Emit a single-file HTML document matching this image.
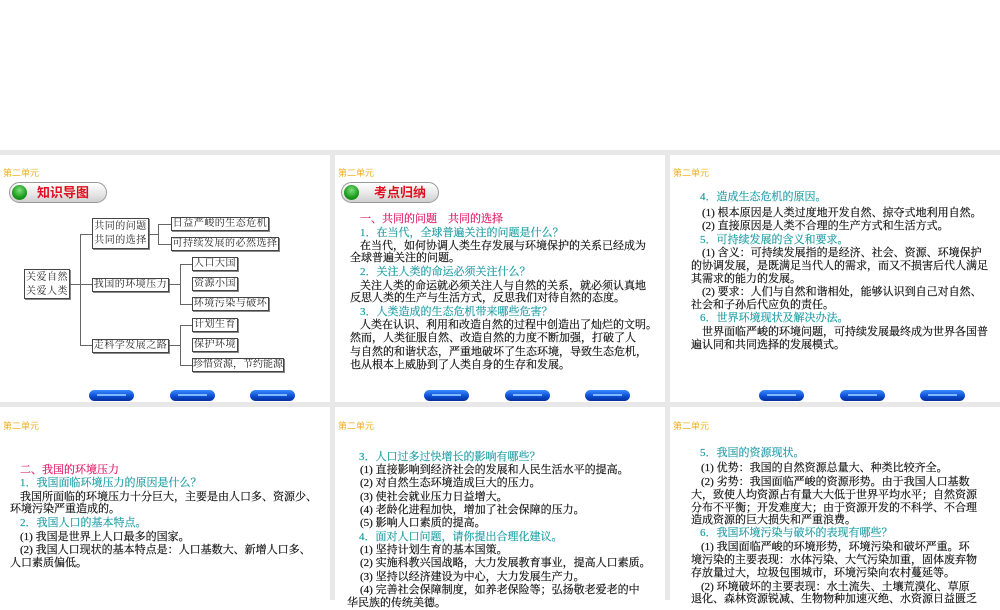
<!DOCTYPE html>
<html><head><meta charset="utf-8"><style>
*{margin:0;padding:0;box-sizing:border-box}
body{width:1000px;height:600px;overflow:hidden;background:#fff;position:relative;font-family:"Liberation Serif","Noto Serif CJK SC",serif}
.g{position:absolute;left:0;top:150px;width:1000px;height:450px;background:#e8e8e8}
.s{position:absolute;background:#fff;overflow:hidden}
.u{position:absolute;left:3px;top:166px;font-size:9px;color:#f0b020;font-family:"Liberation Sans","Noto Sans CJK SC",sans-serif}
.l{position:absolute;font-size:11px;line-height:14px;white-space:nowrap;color:#111;-webkit-text-stroke:0.2px #111}
.t{color:#1f9ea6;-webkit-text-stroke:0.2px #1f9ea6}
.p{color:#e0206a;-webkit-text-stroke:0.2px #e0206a}
.pill{position:absolute;width:98px;height:21px;border:1px solid #999;border-radius:11px;background:linear-gradient(#ffffff,#e8e8e8 55%,#cfcfcf)}
.pill i{position:absolute;left:2px;top:2px;width:15px;height:15px;border-radius:50%;background:radial-gradient(circle at 50% 35%,#7fe07f,#1a9a1a 60%,#0a6a0a)}
.pill b{position:absolute;left:27px;top:2px;font-size:13px;line-height:15px;color:#e01020;font-family:"Liberation Sans","Noto Sans CJK SC",sans-serif}
.btn{position:absolute;width:45px;height:11px;border-radius:6px;background:linear-gradient(#3a8cff,#0a4ad0 60%,#06309a);}
.btn:after{content:"";position:absolute;left:8px;right:8px;top:4px;height:2px;background:#7fb8ff}
.bx{position:absolute;border:1px solid #444;font-size:10px;line-height:12px;color:#222;padding:0;white-space:nowrap;box-shadow:1px 1px 0 #888;letter-spacing:0.5px;text-align:center;overflow:hidden}
.ln{position:absolute;background:#666}
</style></head><body>
<div class="g"></div>
<div class="s" style="left:0;top:155px;width:330px;height:247px"></div>
<div class="s" style="left:335px;top:155px;width:330px;height:247px"></div>
<div class="s" style="left:670px;top:155px;width:330px;height:247px"></div>
<div class="s" style="left:0;top:407px;width:330px;height:193px"></div>
<div class="s" style="left:335px;top:407px;width:330px;height:193px"></div>
<div class="s" style="left:670px;top:407px;width:330px;height:193px"></div>

<div class="u" style="left:3px;top:166px">第二单元</div>
<div class="u" style="left:338px;top:166px">第二单元</div>
<div class="u" style="left:673px;top:166px">第二单元</div>
<div class="u" style="left:3px;top:419px">第二单元</div>
<div class="u" style="left:338px;top:419px">第二单元</div>
<div class="u" style="left:673px;top:419px">第二单元</div>

<div class="pill" style="left:9px;top:182px"><i></i><b>知识导图</b></div>
<div class="pill" style="left:341px;top:182px"><i></i><b style="left:32px">考点归纳</b></div>

<div class="bx" style="left:24px;top:269px;width:46px;height:30px;line-height:14px;padding-top:1px">关爱自然<br>关爱人类</div>
<div class="bx" style="left:92px;top:218px;width:57px;height:31px;line-height:14px;padding-top:1px">共同的问题<br>共同的选择</div>
<div class="bx" style="left:92px;top:278px;width:77px;height:14px">我国的环境压力</div>
<div class="bx" style="left:92px;top:339px;width:77px;height:14px">走科学发展之路</div>
<div class="bx" style="left:171px;top:217px;width:98px;height:14px">日益严峻的生态危机</div>
<div class="bx" style="left:171px;top:237px;width:108px;height:14px">可持续发展的必然选择</div>
<div class="bx" style="left:192px;top:257px;width:46px;height:14px">人口大国</div>
<div class="bx" style="left:192px;top:277px;width:46px;height:14px">资源小国</div>
<div class="bx" style="left:192px;top:297px;width:77px;height:14px">环境污染与破坏</div>
<div class="bx" style="left:192px;top:318px;width:46px;height:14px">计划生育</div>
<div class="bx" style="left:192px;top:338px;width:46px;height:14px">保护环境</div>
<div class="bx" style="left:192px;top:358px;width:92px;height:14px;letter-spacing:0">珍惜资源，节约能源</div>
<div class="ln" style="left:70px;top:284px;width:10px;height:1px"></div>
<div class="ln" style="left:80px;top:234px;width:1px;height:112px"></div>
<div class="ln" style="left:80px;top:234px;width:12px;height:1px"></div>
<div class="ln" style="left:80px;top:284px;width:12px;height:1px"></div>
<div class="ln" style="left:80px;top:345px;width:12px;height:1px"></div>
<div class="ln" style="left:149px;top:234px;width:9px;height:1px"></div>
<div class="ln" style="left:158px;top:224px;width:1px;height:21px"></div>
<div class="ln" style="left:158px;top:224px;width:13px;height:1px"></div>
<div class="ln" style="left:158px;top:244px;width:13px;height:1px"></div>
<div class="ln" style="left:169px;top:284px;width:11px;height:1px"></div>
<div class="ln" style="left:180px;top:264px;width:1px;height:41px"></div>
<div class="ln" style="left:180px;top:264px;width:12px;height:1px"></div>
<div class="ln" style="left:180px;top:304px;width:12px;height:1px"></div>
<div class="ln" style="left:169px;top:345px;width:11px;height:1px"></div>
<div class="ln" style="left:180px;top:325px;width:1px;height:41px"></div>
<div class="ln" style="left:180px;top:325px;width:12px;height:1px"></div>
<div class="ln" style="left:180px;top:365px;width:12px;height:1px"></div>

<div class="btn" style="left:89px;top:390px"></div><div class="btn" style="left:170px;top:390px"></div><div class="btn" style="left:250px;top:390px"></div>
<div class="btn" style="left:424px;top:390px"></div><div class="btn" style="left:505px;top:390px"></div><div class="btn" style="left:585px;top:390px"></div>
<div class="btn" style="left:759px;top:390px"></div><div class="btn" style="left:840px;top:390px"></div><div class="btn" style="left:920px;top:390px"></div>

<div class="l p" style="left:360px;top:212px">一、共同的问题　共同的选择</div>
<div class="l t" style="left:360px;top:226px">1．在当代，全球普遍关注的问题是什么？</div>
<div class="l" style="left:360px;top:239px">在当代，如何协调人类生存发展与环境保护的关系已经成为</div>
<div class="l" style="left:350px;top:251px">全球普遍关注的问题。</div>
<div class="l t" style="left:360px;top:265px">2．关注人类的命运必须关注什么？</div>
<div class="l" style="left:360px;top:279px">关注人类的命运就必须关注人与自然的关系，就必须认真地</div>
<div class="l" style="left:350px;top:291px">反思人类的生产与生活方式，反思我们对待自然的态度。</div>
<div class="l t" style="left:360px;top:305px">3．人类造成的生态危机带来哪些危害？</div>
<div class="l" style="left:360px;top:318px">人类在认识、利用和改造自然的过程中创造出了灿烂的文明。</div>
<div class="l" style="left:350px;top:331px">然而，人类征服自然、改造自然的力度不断加强，打破了人</div>
<div class="l" style="left:350px;top:345px">与自然的和谐状态，严重地破坏了生态环境，导致生态危机，</div>
<div class="l" style="left:350px;top:358px">也从根本上威胁到了人类自身的生存和发展。</div>

<div class="l t" style="left:700px;top:190px">4．造成生态危机的原因。</div>
<div class="l" style="left:702px;top:206px">(1) 根本原因是人类过度地开发自然、掠夺式地利用自然。</div>
<div class="l" style="left:702px;top:219px">(2) 直接原因是人类不合理的生产方式和生活方式。</div>
<div class="l t" style="left:700px;top:233px">5．可持续发展的含义和要求。</div>
<div class="l" style="left:702px;top:246px">(1) 含义：可持续发展指的是经济、社会、资源、环境保护</div>
<div class="l" style="left:691px;top:259px">的协调发展，是既满足当代人的需求，而又不损害后代人满足</div>
<div class="l" style="left:691px;top:272px">其需求的能力的发展。</div>
<div class="l" style="left:702px;top:285px">(2) 要求：人们与自然和谐相处，能够认识到自己对自然、</div>
<div class="l" style="left:691px;top:298px">社会和子孙后代应负的责任。</div>
<div class="l t" style="left:700px;top:311px">6．世界环境现状及解决办法。</div>
<div class="l" style="left:702px;top:325px">世界面临严峻的环境问题，可持续发展最终成为世界各国普</div>
<div class="l" style="left:691px;top:338px">遍认同和共同选择的发展模式。</div>

<div class="l p" style="left:20px;top:463px">二、我国的环境压力</div>
<div class="l t" style="left:20px;top:476px">1．我国面临环境压力的原因是什么？</div>
<div class="l" style="left:20px;top:490px">我国所面临的环境压力十分巨大，主要是由人口多、资源少、</div>
<div class="l" style="left:10px;top:502px">环境污染严重造成的。</div>
<div class="l t" style="left:20px;top:516px">2．我国人口的基本特点。</div>
<div class="l" style="left:20px;top:530px">(1) 我国是世界上人口最多的国家。</div>
<div class="l" style="left:20px;top:543px">(2) 我国人口现状的基本特点是：人口基数大、新增人口多、</div>
<div class="l" style="left:10px;top:556px">人口素质偏低。</div>

<div class="l t" style="left:359px;top:450px">3．人口过多过快增长的影响有哪些？</div>
<div class="l" style="left:360px;top:463px">(1) 直接影响到经济社会的发展和人民生活水平的提高。</div>
<div class="l" style="left:360px;top:476px">(2) 对自然生态环境造成巨大的压力。</div>
<div class="l" style="left:360px;top:490px">(3) 使社会就业压力日益增大。</div>
<div class="l" style="left:360px;top:503px">(4) 老龄化进程加快，增加了社会保障的压力。</div>
<div class="l" style="left:360px;top:516px">(5) 影响人口素质的提高。</div>
<div class="l t" style="left:359px;top:530px">4．面对人口问题，请你提出合理化建议。</div>
<div class="l" style="left:360px;top:543px">(1) 坚持计划生育的基本国策。</div>
<div class="l" style="left:360px;top:556px">(2) 实施科教兴国战略，大力发展教育事业，提高人口素质。</div>
<div class="l" style="left:360px;top:570px">(3) 坚持以经济建设为中心，大力发展生产力。</div>
<div class="l" style="left:360px;top:583px">(4) 完善社会保障制度，如养老保险等；弘扬敬老爱老的中</div>
<div class="l" style="left:347px;top:596px">华民族的传统美德。</div>

<div class="l t" style="left:700px;top:446px">5．我国的资源现状。</div>
<div class="l" style="left:701px;top:461px">(1) 优势：我国的自然资源总量大、种类比较齐全。</div>
<div class="l" style="left:701px;top:475px">(2) 劣势：我国面临严峻的资源形势。由于我国人口基数</div>
<div class="l" style="left:691px;top:488px">大，致使人均资源占有量大大低于世界平均水平；自然资源</div>
<div class="l" style="left:691px;top:501px">分布不平衡；开发难度大；由于资源开发的不科学、不合理</div>
<div class="l" style="left:691px;top:513px">造成资源的巨大损失和严重浪费。</div>
<div class="l t" style="left:700px;top:526px">6．我国环境污染与破坏的表现有哪些？</div>
<div class="l" style="left:701px;top:540px">(1) 我国面临严峻的环境形势，环境污染和破坏严重。环</div>
<div class="l" style="left:691px;top:553px">境污染的主要表现：水体污染、大气污染加重，固体废弃物</div>
<div class="l" style="left:691px;top:566px">存放量过大，垃圾包围城市，环境污染向农村蔓延等。</div>
<div class="l" style="left:701px;top:580px">(2) 环境破坏的主要表现：水土流失、土壤荒漠化、草原</div>
<div class="l" style="left:691px;top:592px">退化、森林资源锐减、生物物种加速灭绝、水资源日益匮乏</div>
</body></html>
